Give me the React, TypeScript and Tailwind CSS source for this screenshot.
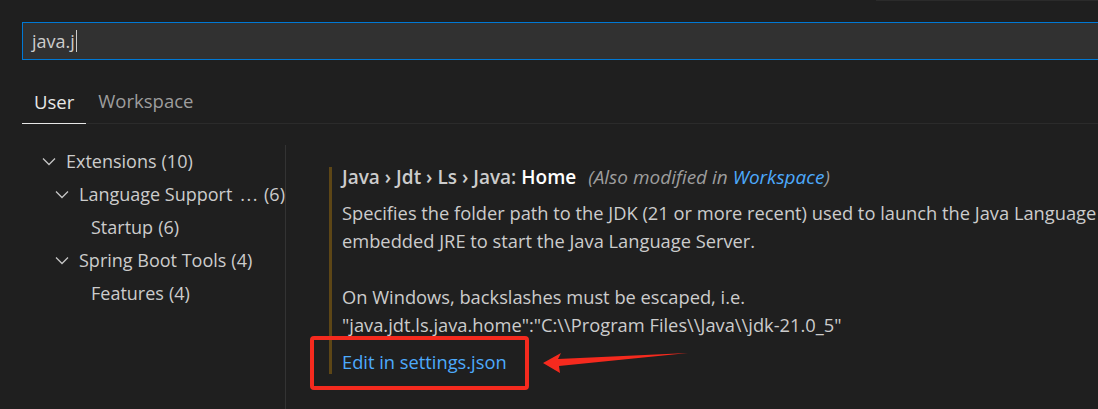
import React from "react";

const font = { fontFamily: '"Open Sans", "Noto Sans", sans-serif' };

function Chevron() {
  return (
    <svg width="14" height="9" viewBox="0 0 14 9" className="shrink-0">
      <polyline points="1,1.5 7,7.5 13,1.5" fill="none" stroke="#c5c5c5" strokeWidth="1.3" />
    </svg>
  );
}

function TreeRow({ level, label, count, chevron, dots }: { level: number; label: string; count: string; chevron: boolean; dots?: boolean }) {
  const pad = level === 0 ? "pl-[20px]" : level === 1 ? "pl-[33px]" : "pl-[69px]";
  return (
    <div className={`h-[33px] flex items-center ${pad} whitespace-nowrap`}>
      {chevron && <span className="w-[24px] shrink-0 flex items-center"><Chevron /></span>}
      <span className="text-[#cccccc] shrink-0">{label}</span>
      {dots && <span className="text-[#cccccc] ml-[8px] tracking-[1.5px] shrink-0">...</span>}
      <span className={`text-[#cccccc] shrink-0 ${dots ? "ml-[5px]" : "ml-[5px]"}`}>{count}</span>
    </div>
  );
}

export default function App() {
  return (
    <div className="relative w-[1098px] h-[409px] bg-[#1f1f1f] overflow-hidden text-[18px]" style={font}>
      <div className="h-px flex justify-end">
        <div className="w-[222px] bg-[#2b2b2b]" />
      </div>
      {/* search */}
      <div className="ml-[22px] mt-[21px] w-[1100px] h-[38px] border border-[#0078d4] bg-[#313131] flex items-center pl-[9px]">
        <span className="text-[#cccccc]">java.j</span>
        <span className="w-px h-[22px] bg-[#cccccc] ml-[1px]" />
      </div>
      {/* tabs */}
      <div className="ml-[22px] mt-[27px] flex items-end border-b border-[#2b2b2b] h-[37px] text-[18.5px]">
        <div className="h-full px-[12px] flex items-start border-b border-[#e7e7e7] -mb-px">
          <span className="text-[#e7e7e7]">User</span>
        </div>
        <div className="h-full px-[12px] flex items-start">
          <span className="text-[#9d9d9d]">Workspace</span>
        </div>
      </div>
      {/* body */}
      <div className="flex ml-[22px] mt-[21px]">
        <div className="w-[264px] shrink-0 border-r border-[#333333] h-[300px] text-[18px]">
          <TreeRow level={0} label="Extensions" count="(10)" chevron />
          <TreeRow level={1} label="Language Support" count="(6)" chevron dots />
          <TreeRow level={2} label="Startup" count="(6)" chevron={false} />
          <TreeRow level={1} label="Spring Boot Tools" count="(4)" chevron />
          <TreeRow level={2} label="Features" count="(4)" chevron={false} />
        </div>
        <div className="ml-[43px] mt-[23px] flex-1 min-w-0">
          <div className="border-l-[3px] border-[#5d4616] pl-[10px] whitespace-nowrap">
            <div className="h-[20px] flex items-center -mt-[1px] text-[#cccccc] text-[19px]">
              <span className="font-semibold">Java › Jdt › Ls › Java: </span>
              <span className="font-semibold text-white ml-[5px]">Home</span>
              <span className="italic text-[#9d9d9d] ml-[12px]">(Also modified in <span className="text-[#4daafc]">Workspace</span>)</span>
            </div>
            <div className="mt-[12px] leading-[28px] text-[#cccccc] text-[18.3px]">
              <div>Specifies the folder path to the JDK (21 or more recent) used to launch the Java Language Server. This JDK will also be used to launch the</div>
              <div>embedded JRE to start the Java Language Server.</div>
              <div className="h-[28px]" />
              <div>On Windows, backslashes must be escaped, i.e.</div>
              <div>{'"java.jdt.ls.java.home":"C:\\\\Program Files\\\\Java\\\\jdk-21.0_5"'}</div>
            </div>
            <div className="mt-[11px] leading-[24px] text-[#4daafc] text-[18.3px]">Edit in settings.json</div>
          </div>
        </div>
      </div>
      {/* annotation */}
      <div className="absolute left-[310px] top-[336px] w-[219px] h-[54px] border-[4px] border-[#f52a1e] rounded-[4px]" />
      <svg className="absolute left-[540px] top-[348px]" width="150" height="28" viewBox="0 0 150 28">
        <polygon points="3,15 21,5 18,11 148,5 19,18 20,25" fill="#f52a1e" />
      </svg>
    </div>
  );
}
